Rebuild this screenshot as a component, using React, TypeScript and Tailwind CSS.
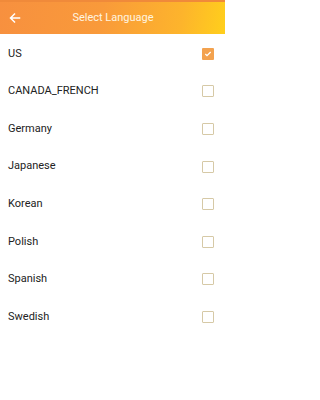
import React, { useState } from "react";

const languages = [
  "US",
  "CANADA_FRENCH",
  "Germany",
  "Japanese",
  "Korean",
  "Polish",
  "Spanish",
  "Swedish",
];

export default function App() {
  const [selected, setSelected] = useState("US");

  return (
    <div className="w-[225px] h-[400px] bg-white font-['Roboto',sans-serif] overflow-hidden">
      <div className="h-[34px] flex items-center bg-[linear-gradient(100deg,#f7903f_0%,#f99a3a_45%,#fdb42c_80%,#ffcf1c_100%)] border-t-2 border-[#f08a3a] relative">
        <button className="w-[30px] h-full flex items-center justify-center text-white">
          <svg width="12" height="12" viewBox="0 0 24 24" fill="none" stroke="#fff" strokeWidth="3" strokeLinecap="square">
            <path d="M21 12H4M11 4l-8 8 8 8" />
          </svg>
        </button>
        <div className="absolute inset-0 flex items-center justify-center pointer-events-none">
          <span className="text-[11px] text-[#fff5e0] pl-[1px]">Select Language</span>
        </div>
      </div>
      <div className="flex flex-col pt-[1px]">
        {languages.map((lang) => {
          const checked = selected === lang;
          return (
            <div
              key={lang}
              onClick={() => setSelected(lang)}
              className="h-[37.6px] flex items-center justify-between pl-[8px] pr-[11px]"
            >
              <span className="text-[11px] text-[#222222]">{lang}</span>
              {checked ? (
                <span className="w-[12px] h-[12px] bg-[#f3a24f] rounded-[1px] flex items-center justify-center">
                  <svg width="8" height="8" viewBox="0 0 24 24" fill="none" stroke="#fff" strokeWidth="4">
                    <path d="M4 12l5 5 11-11" />
                  </svg>
                </span>
              ) : (
                <span className="w-[12px] h-[12px] border border-[#d6c9a6] rounded-[1px]" />
              )}
            </div>
          );
        })}
      </div>
    </div>
  );
}
